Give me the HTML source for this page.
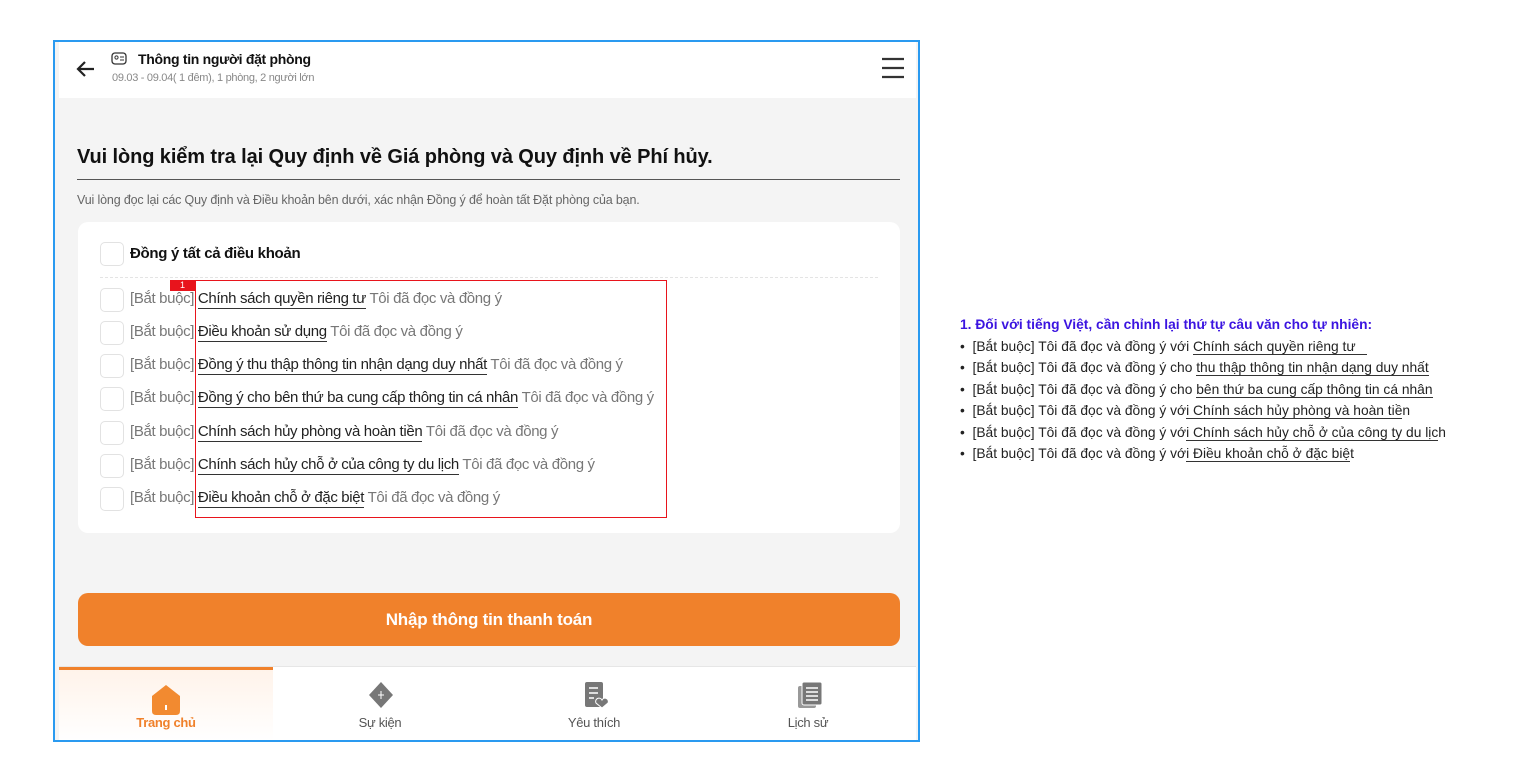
<!DOCTYPE html>
<html><head><meta charset="utf-8"><style>
*{margin:0;padding:0;box-sizing:border-box}
body{width:1521px;height:775px;background:#fff;font-family:"Liberation Sans",Arial,sans-serif;position:relative;overflow:hidden}
.frame{position:absolute;left:53px;top:40px;width:867px;height:702px;border:2px solid #2a9af0;background:#f4f4f4;overflow:hidden}
.hdr{position:absolute;left:4px;top:0;width:857px;height:56px;background:#fff}
.abs{position:absolute}
.card{position:absolute;left:23px;top:180px;width:822px;height:311px;background:#fff;border-radius:10px}
.cb{position:absolute;width:24px;height:24px;border:1px solid #e2e2e2;border-radius:5px;background:#fff}
.row{position:absolute;left:52px;font-size:15px;letter-spacing:-0.35px;color:#777;white-space:nowrap}
.row u{color:#222;text-decoration:none;border-bottom:1.5px solid #333;padding-bottom:1px}
.nav{position:absolute;left:4px;top:624px;width:857px;height:74px;background:#fff;border-top:1px solid #e6e6e6}
.nv{position:absolute;top:0;width:214px;height:74px;text-align:center;font-size:13px;letter-spacing:-0.3px;color:#555}
.nv span{position:absolute;left:0;right:0;top:48px}
.note{position:absolute;left:960px;font-family:"Liberation Sans","Noto Sans CJK SC",sans-serif;font-size:13.8px;color:#222;white-space:nowrap}
.note u{text-decoration:none;border-bottom:1px solid #333}
</style></head><body>
<div class="frame">
 <div class="hdr">
  <svg class="abs" style="left:16px;top:16px" width="22" height="22" viewBox="0 0 22 22"><path d="M19 11H4M10 4l-7 7 7 7" stroke="#222" stroke-width="2.2" fill="none"/></svg>
  <svg class="abs" style="left:52px;top:10px" width="16" height="13" viewBox="0 0 16 13"><rect x="1" y="1" width="14" height="11" rx="3" fill="none" stroke="#333" stroke-width="1.3"/><circle cx="5.5" cy="5.5" r="1.6" fill="none" stroke="#333"/><path d="M9 5h4M9 8h4" stroke="#333"/></svg>
  <div class="abs" style="left:79px;top:9px;font-size:14px;letter-spacing:-0.3px;font-weight:bold;color:#111">Thông tin người đặt phòng</div>
  <div class="abs" style="left:53px;top:30px;font-size:11px;color:#888;letter-spacing:-0.3px">09.03 - 09.04( 1 đêm), 1 phòng, 2 người lớn</div>
  <svg class="abs" style="left:822px;top:15px" width="24" height="22" viewBox="0 0 24 22"><path d="M1 2h22M1 11h22M1 20h22" stroke="#333" stroke-width="2.2"/></svg>
 </div>
 <div class="abs" style="left:22px;top:104px;font-size:20px;letter-spacing:-0.1px;font-weight:bold;color:#111">Vui lòng kiểm tra lại Quy định về Giá phòng và Quy định về Phí hủy.</div>
 <div class="abs" style="left:22px;top:137px;width:823px;height:1px;background:#555"></div>
 <div class="abs" style="left:22px;top:151px;font-size:12.5px;letter-spacing:-0.15px;color:#666">Vui lòng đọc lại các Quy định và Điều khoản bên dưới, xác nhận Đồng ý để hoàn tất Đặt phòng của bạn.</div>
 <div class="card">
  <div class="cb" style="left:22px;top:20px"></div>
  <div class="abs" style="left:52px;top:23px;font-size:15px;letter-spacing:-0.3px;font-weight:bold;color:#111">Đồng ý tất cả điều khoản</div>
  <div class="abs" style="left:22px;top:55px;width:778px;border-top:1px dashed #e4e4e4"></div>
  <div class="cb" style="left:22px;top:66px"></div><div class="row" style="top:68px">[Bắt buộc] <u>Chính sách quyền riêng tư</u> Tôi đã đọc và đồng ý</div>
  <div class="cb" style="left:22px;top:99px"></div><div class="row" style="top:101px">[Bắt buộc] <u>Điều khoản sử dụng</u> Tôi đã đọc và đồng ý</div>
  <div class="cb" style="left:22px;top:132px"></div><div class="row" style="top:134px">[Bắt buộc] <u>Đồng ý thu thập thông tin nhận dạng duy nhất</u> Tôi đã đọc và đồng ý</div>
  <div class="cb" style="left:22px;top:165px"></div><div class="row" style="top:167px">[Bắt buộc] <u>Đồng ý cho bên thứ ba cung cấp thông tin cá nhân</u> Tôi đã đọc và đồng ý</div>
  <div class="cb" style="left:22px;top:199px"></div><div class="row" style="top:201px">[Bắt buộc] <u>Chính sách hủy phòng và hoàn tiền</u> Tôi đã đọc và đồng ý</div>
  <div class="cb" style="left:22px;top:232px"></div><div class="row" style="top:234px">[Bắt buộc] <u>Chính sách hủy chỗ ở của công ty du lịch</u> Tôi đã đọc và đồng ý</div>
  <div class="cb" style="left:22px;top:265px"></div><div class="row" style="top:267px">[Bắt buộc] <u>Điều khoản chỗ ở đặc biệt</u> Tôi đã đọc và đồng ý</div>
 </div>
 <div class="abs" style="left:140px;top:238px;width:472px;height:238px;border:1.5px solid #e8141c"></div>
 <div class="abs" style="left:115px;top:238px;width:25px;height:11px;background:#e8141c;color:#fff;font-size:9px;text-align:center;line-height:11px">1</div>
 <div class="abs" style="left:23px;top:551px;width:822px;height:53px;background:#f0812b;border-radius:10px;color:#fff;font-size:17px;letter-spacing:-0.2px;font-weight:bold;text-align:center;line-height:53px">Nhập thông tin thanh toán</div>
 <div class="nav">
  <div class="nv" style="left:0;background:linear-gradient(#fff3ea,#fff);border-top:3px solid #f0812b;color:#f0812b;font-weight:bold"><svg class="abs" style="left:92px;top:14px" width="30" height="32" viewBox="0 0 30 32"><path d="M15 1L29 12V27Q29 31 25 31H5Q1 31 1 27V12Z" fill="#f28a30"/><rect x="14" y="21" width="2" height="5" fill="#fff"/></svg><span style="top:45px">Trang chủ</span></div>
  <div class="nv" style="left:214px"><svg class="abs" style="left:94px;top:14px" width="28" height="28" viewBox="0 0 28 28"><path d="M14 1L26 14 14 27 2 14Z" fill="#777"/><path d="M14 10v8M11 14h6" stroke="#fff" stroke-width="1"/></svg><span>Sự kiện</span></div>
  <div class="nv" style="left:428px"><svg class="abs" style="left:96px;top:14px" width="26" height="28" viewBox="0 0 26 28"><rect x="2" y="1" width="18" height="25" rx="2" fill="#777"/><path d="M6 7h9M6 12h9M6 17h5" stroke="#fff" stroke-width="1.5"/><path d="M19 27l-6-5a3 3 0 0 1 6-3 3 3 0 0 1 6 3z" fill="#777" stroke="#fff"/></svg><span>Yêu thích</span></div>
  <div class="nv" style="left:642px"><svg class="abs" style="left:96px;top:14px" width="26" height="28" viewBox="0 0 26 28"><rect x="1" y="5" width="18" height="22" rx="2" fill="#999"/><rect x="5" y="1" width="20" height="23" rx="2" fill="#777" stroke="#fff"/><path d="M9 7h12M9 11h12M9 15h12M9 19h12" stroke="#fff" stroke-width="1.5"/></svg><span>Lịch sử</span></div>
 </div>
</div>
<div class="note" style="top:317px;color:#3b14e0;font-weight:bold">1. Đối với tiếng Việt, cần chỉnh lại thứ tự câu văn cho tự nhiên:</div>
<div class="note" style="top:339px">• &nbsp;[Bắt buộc] Tôi đã đọc và đồng ý với <u>Chính sách quyền riêng tư &nbsp;&nbsp;</u></div>
<div class="note" style="top:360px">• &nbsp;[Bắt buộc] Tôi đã đọc và đồng ý cho <u>thu thập thông tin nhận dạng duy nhất</u></div>
<div class="note" style="top:382px">• &nbsp;[Bắt buộc] Tôi đã đọc và đồng ý cho <u>bên thứ ba cung cấp thông tin cá nhân</u></div>
<div class="note" style="top:403px">• &nbsp;[Bắt buộc] Tôi đã đọc và đồng ý vớ<u>i Chính sách hủy phòng và hoàn tiề</u>n</div>
<div class="note" style="top:425px">• &nbsp;[Bắt buộc] Tôi đã đọc và đồng ý vớ<u>i Chính sách hủy chỗ ở của công ty du lịc</u>h</div>
<div class="note" style="top:446px">• &nbsp;[Bắt buộc] Tôi đã đọc và đồng ý vớ<u>i Điều khoản chỗ ở đặc biệ</u>t</div>
</body></html>
